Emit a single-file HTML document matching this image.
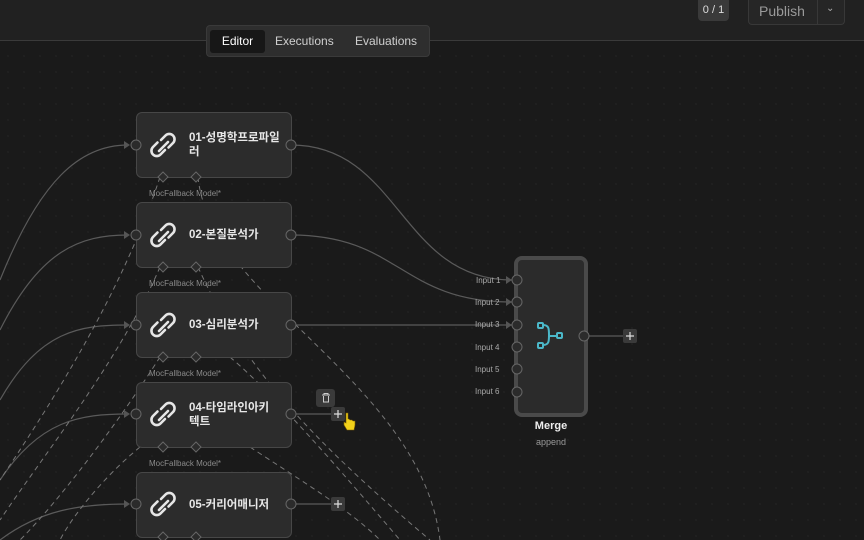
<!DOCTYPE html>
<html><head><meta charset="utf-8"><style>
body{margin:0;width:864px;height:540px;overflow:hidden;background:#1a1a1a;font-family:"Liberation Sans","Noto Sans CJK KR",sans-serif;position:relative}
.top{position:absolute;left:0;top:0;width:864px;height:40px;background:#212121;border-bottom:1px solid #3a3a3a}
.tabs{position:absolute;left:206px;top:25px;width:224px;height:32px;background:#2e2e2e;border-radius:4px;border:1px solid #3a3a3a;box-sizing:border-box}
.tab{position:absolute;top:4px;height:23px;line-height:23px;font-size:12px;color:#cfcfcf}
.pub{position:absolute;left:748px;top:0;width:97px;height:25px;background:#262626;border:1px solid #383838;border-top:none;border-radius:0 0 4px 4px;box-sizing:border-box}
.node{position:absolute;left:136px;width:156px;height:66px;background:#2c2c2c;border:1px solid #474747;border-radius:6px;box-sizing:border-box}
.nt{position:absolute;left:52px;top:0;height:64px;display:flex;align-items:center;font-size:11.5px;font-weight:bold;color:#e8e8e8;line-height:14px;width:100px}
.lbl{position:absolute;font-size:8px;color:#8a8a8a}
</style></head><body>
<svg width="864" height="540" style="position:absolute;left:0;top:0">
<defs><pattern id="d" width="16" height="16" patternUnits="userSpaceOnUse"><circle cx="8" cy="8" r="0.6" fill="#2c2c2c"/></pattern></defs>
<rect width="864" height="540" fill="url(#d)"/>
<g fill="none" stroke="#5a5a5a" stroke-width="1.2">
<path d="M291 145 C400 145 400 280 512 280"/>
<path d="M291 235 C400 235 400 302 512 302"/>
<path d="M291 325 L512 325"/>
<path d="M587 336 L624 336"/>
<path d="M291 414 L332 414"/>
<path d="M291 504 L332 504"/>
<path d="M0 280 C40 180 80 145 128 145"/>
<path d="M0 330 C40 250 80 235 128 235"/>
<path d="M0 400 C40 330 80 325 128 325"/>
<path d="M0 480 C40 420 80 414 128 414"/>
<path d="M0 540 C40 510 80 504 128 504"/>
</g>
<g fill="none" stroke="#777" stroke-width="1" stroke-dasharray="5 4">
<path d="M198 177 C210 300 420 380 440 540"/>
<path d="M198 267 C240 360 300 430 430 540"/>
<path d="M230 357 C280 400 340 470 400 540"/>
<path d="M250 447 C300 480 350 510 380 540"/>
<path d="M160 177 C120 300 40 420 0 480"/>
<path d="M160 267 C120 360 40 460 0 520"/>
<path d="M160 357 C120 420 60 500 20 540"/>
<path d="M140 447 C100 480 70 520 60 540"/>
</g>
<g fill="#555"><path d="M124 141 l6 4 -6 4z"/><path d="M124 231 l6 4 -6 4z"/><path d="M124 321 l6 4 -6 4z"/><path d="M124 410 l6 4 -6 4z"/><path d="M124 500 l6 4 -6 4z"/>
<path d="M506 276 l6 4 -6 4z"/><path d="M506 298 l6 4 -6 4z"/><path d="M506 321 l6 4 -6 4z"/></g>
</svg>
<div class="top"></div>
<div class="tabs"><div class="tab" style="left:3px;width:55px;background:#171717;border-radius:3px;text-align:center;color:#fff">Editor</div><div class="tab" style="left:68px">Executions</div><div class="tab" style="left:148px">Evaluations</div></div>
<div style="position:absolute;left:698px;top:0;width:31px;height:21px;background:#3a3a3a;border-radius:0 0 4px 4px;color:#ddd;font-size:11px;text-align:center;line-height:21px">0 / 1</div>
<div class="pub"><span style="position:absolute;left:10px;top:3px;font-size:14px;color:#9a9a9a">Publish</span><span style="position:absolute;left:68px;top:0;width:1px;height:25px;background:#383838"></span><span style="position:absolute;left:77px;top:3px;font-size:10px;color:#aaa">⌄</span></div>

<div class="node" style="top:112px"><div class="nt">01-성명학프로파일<br>러</div></div>
<div class="node" style="top:202px"><div class="nt">02-본질분석가</div></div>
<div class="node" style="top:292px"><div class="nt">03-심리분석가</div></div>
<div class="node" style="top:382px"><div class="nt">04-타임라인아키<br>텍트</div></div>
<div class="node" style="top:472px"><div class="nt">05-커리어매니저</div></div>
<div class="lbl" style="left:149px;top:189px">MocFallback Model*</div>
<div class="lbl" style="left:149px;top:279px">MocFallback Model*</div>
<div class="lbl" style="left:149px;top:369px">MocFallback Model*</div>
<div class="lbl" style="left:149px;top:459px">MocFallback Model*</div>

<div style="position:absolute;left:514px;top:256px;width:74px;height:161px;background:#2b2b2b;border:4px solid #4a4a4a;border-radius:8px;box-sizing:border-box"></div>
<div style="position:absolute;left:514px;top:420px;width:74px;text-align:center;font-size:11px;font-weight:bold;color:#eee">Merge</div>
<div style="position:absolute;left:514px;top:437px;width:74px;text-align:center;font-size:9px;color:#999">append</div>
<div class="lbl" style="left:476px;top:276px;font-size:8px;color:#aaa">Input 1</div>
<div class="lbl" style="left:475px;top:298px;color:#aaa">Input 2</div>
<div class="lbl" style="left:475px;top:320px;color:#aaa">Input 3</div>
<div class="lbl" style="left:475px;top:343px;color:#aaa">Input 4</div>
<div class="lbl" style="left:475px;top:365px;color:#aaa">Input 5</div>
<div class="lbl" style="left:475px;top:387px;color:#aaa">Input 6</div>

<svg width="864" height="540" style="position:absolute;left:0;top:0">
<g fill="#2b2b2b" stroke="#666" stroke-width="1">
<circle cx="136" cy="145" r="5"/><circle cx="291" cy="145" r="5"/>
<circle cx="136" cy="235" r="5"/><circle cx="291" cy="235" r="5"/>
<circle cx="136" cy="325" r="5"/><circle cx="291" cy="325" r="5"/>
<circle cx="136" cy="414" r="5"/><circle cx="291" cy="414" r="5"/>
<circle cx="136" cy="504" r="5"/><circle cx="291" cy="504" r="5"/>
<circle cx="517" cy="280" r="5"/><circle cx="517" cy="302" r="5"/><circle cx="517" cy="325" r="5"/><circle cx="517" cy="347" r="5"/><circle cx="517" cy="369" r="5"/><circle cx="517" cy="392" r="5"/>
<circle cx="584" cy="336" r="5"/>
<g id="dm"><path d="M163 172 l5 5 -5 5 -5 -5z"/><path d="M196 172 l5 5 -5 5 -5 -5z"/></g>
<use href="#dm" y="90"/><use href="#dm" y="180"/><use href="#dm" y="270"/><use href="#dm" y="360"/>
</g>
<g id="lk" fill="none" stroke="#e6e6e6" stroke-width="2.6" stroke-linecap="round">
<path d="M161 140 l4.5 -4.5 a5 5 0 0 1 7.5 7.5 l-4.5 4.5"/><path d="M165 150 l-4.5 4.5 a5 5 0 0 1 -7.5 -7.5 l4.5 -4.5"/><path d="M159 151 l9 -9"/>
</g>
<use href="#lk" y="90"/><use href="#lk" y="180"/><use href="#lk" y="269"/><use href="#lk" y="359"/>
<g fill="none" stroke="#4bb8c9" stroke-width="2"><rect x="538" y="323" width="5" height="5" rx="1"/><rect x="538" y="343" width="5" height="5" rx="1"/><rect x="557" y="333" width="5" height="5" rx="1"/><path d="M543 325 c6 0 6 4 6 10 c0 6 0 10 -6 10 M549 336 h8"/></g>
<g><rect x="623" y="329" width="14" height="14" rx="2" fill="#3a3a3a"/><rect x="331" y="407" width="14" height="14" rx="2" fill="#3a3a3a"/><rect x="331" y="497" width="14" height="14" rx="2" fill="#3a3a3a"/><rect x="316" y="389" width="19" height="18" rx="3" fill="#3a3a3a"/>
<g stroke="#ddd" stroke-width="1.2"><path d="M630 332v8M626 336h8M338 410v8M334 414h8M338 500v8M334 504h8"/></g>
<g stroke="#ccc" fill="none" stroke-width="1"><path d="M322 395h8M324 395v-1.5h4v1.5M323.5 396v6h5v-6"/></g>
<path d="M346 413 v10 l-2 -1 v3 l3 5 h7 l1 -5 v-4 l-2 0 -1 -1 -2 0 -1 -1 -1 0 v-6z" fill="#f2d11a" stroke="#7a5d00" stroke-width="0.6"/></g>
</svg>
</body></html>
